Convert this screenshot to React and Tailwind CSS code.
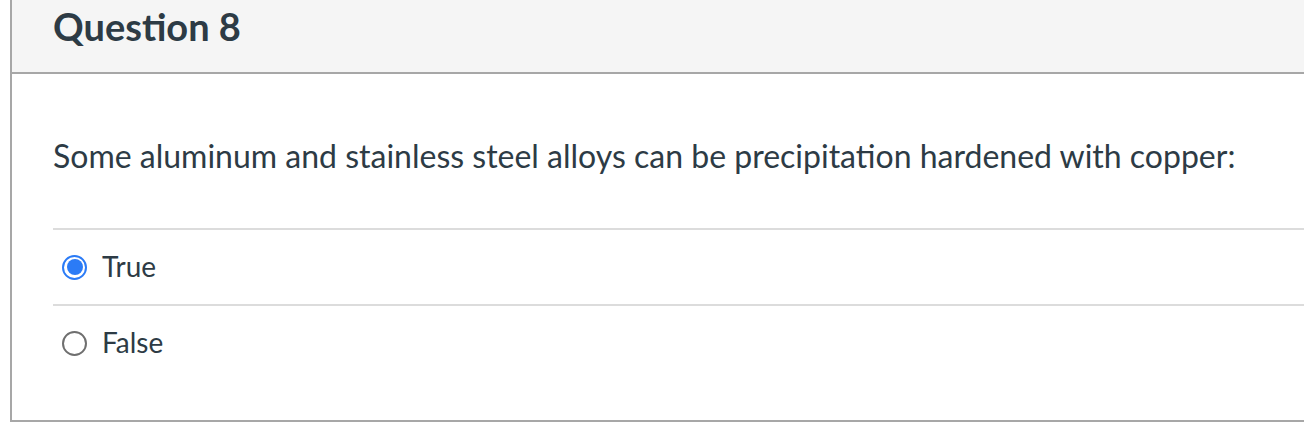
export default function App() {
  const options = [
    { label: "True", checked: true },
    { label: "False", checked: false },
  ];

  return (
    <div className="h-[422px] w-full overflow-hidden bg-white" style={{ fontFamily: "Lato, 'Open Sans', sans-serif" }}>
      <div className="ml-[10px] h-[422px] border-l-2 border-b-2 border-[#a7a7a7] text-[#2d3b45]">
        {/* header */}
        <div className="h-[74px] border-b-2 border-[#a7a7a7] bg-[#f5f5f5] pl-[41px] pt-[4px]">
          <h2 className="text-[38px] font-bold leading-[1.2]">Question 8</h2>
        </div>

        {/* body */}
        <div className="pl-[41px] pt-[63px]">
          <p className="text-[32px] leading-[1.2]">
            Some aluminum and stainless steel alloys can be precipitation hardened with copper:
          </p>
          <div className="mt-[53px]">
            {options.map((opt) => (
              <div key={opt.label} className="flex h-[76px] items-center gap-[15px] border-t-2 border-[#dcdcdc] pl-[9px]">
                {opt.checked ? (
                  <span className="flex h-[25px] w-[25px] items-center justify-center rounded-full border-2 border-[#2b7bf6] bg-white">
                    <span className="h-[16px] w-[16px] rounded-full bg-[#2b7bf6]" />
                  </span>
                ) : (
                  <span className="h-[25px] w-[25px] rounded-full border-2 border-[#6f6f6f] bg-white" />
                )}
                <span className="-mt-[2px] text-[28px] leading-[1.2]">{opt.label}</span>
              </div>
            ))}
          </div>
        </div>
      </div>
    </div>
  );
}
